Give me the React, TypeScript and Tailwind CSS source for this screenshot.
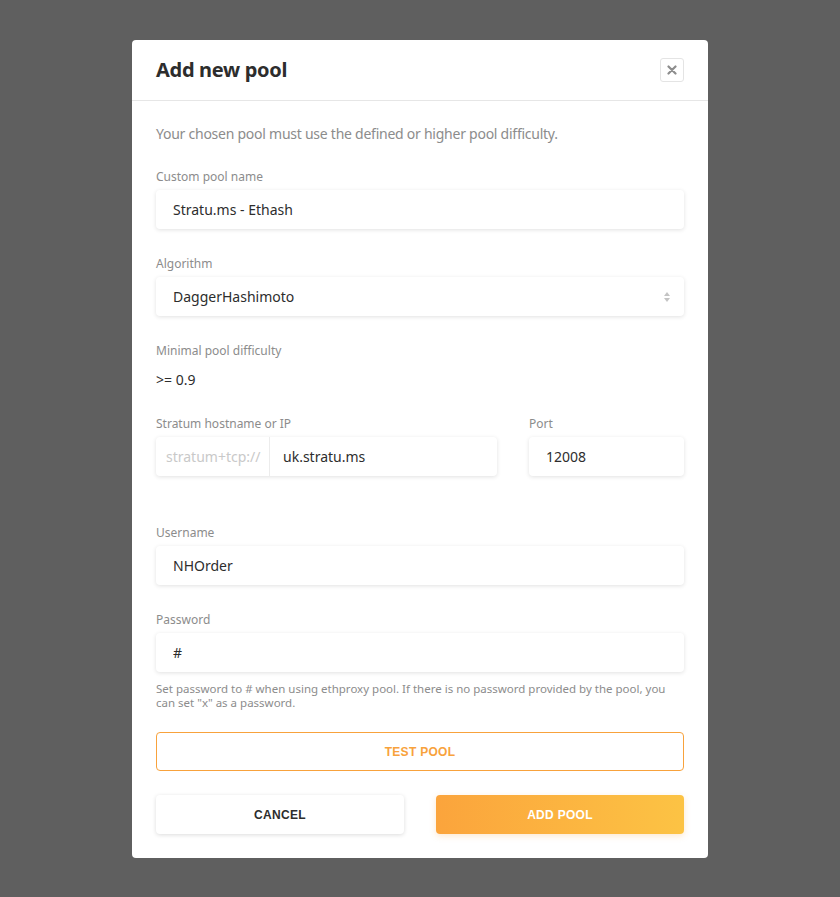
import { useState } from "react";

// Label above a field
function Label({ children }: { children: React.ReactNode }) {
  return <label className="block text-[12px] leading-[14px] text-[#8c8c8c] mb-[6px]">{children}</label>;
}

const boxCls =
  "h-[39px] bg-white rounded-[4px] shadow-[0_1px_4px_rgba(0,0,0,0.12)] flex items-center";

export default function App() {
  const [name, setName] = useState("Stratu.ms - Ethash");
  const [host, setHost] = useState("uk.stratu.ms");
  const [port, setPort] = useState("12008");
  const [user, setUser] = useState("NHOrder");
  const [pass, setPass] = useState("#");

  return (
    <div
      className="min-h-[897px] w-full bg-[#5f5f5f] flex justify-center pt-[40px]"
      style={{ fontFamily: '"Noto Sans", "Open Sans", sans-serif' }}
    >
      <div className="w-[576px] h-[818px] bg-white rounded-[4px] flex flex-col">
        {/* Header */}
        <div className="h-[61px] border-b border-[#e6e6e6] flex items-center justify-between px-[24px] shrink-0">
          <h2 className="text-[20px] font-bold text-[#2d2d2d] tracking-[-0.3px]">Add new pool</h2>
          <button className="w-[24px] h-[24px] border border-[#e4e4e4] rounded-[3px] flex items-center justify-center text-[#8d8d8d]">
            <svg width="10" height="10" viewBox="0 0 10 10">
              <path d="M1.5 1.5 L8.5 8.5 M8.5 1.5 L1.5 8.5" stroke="currentColor" strokeWidth="2.2" strokeLinecap="round" />
            </svg>
          </button>
        </div>

        {/* Body */}
        <div className="px-[24px] pt-[23px]">
          <p className="text-[14px] leading-[20px] text-[#8c8c8c] tracking-[-0.25px]">
            Your chosen pool must use the defined or higher pool difficulty.
          </p>

          <div className="mt-[26px]">
            <Label>Custom pool name</Label>
            <div className={boxCls}>
              <input
                className="w-full h-full px-[17px] text-[14px] text-[#2d2d2d] outline-none bg-transparent"
                value={name}
                onChange={(e) => setName(e.target.value)}
              />
            </div>
          </div>

          <div className="mt-[28px]">
            <Label>Algorithm</Label>
            <div className={boxCls + " justify-between px-[17px]"}>
              <span className="text-[14px] text-[#2d2d2d]">DaggerHashimoto</span>
              <svg width="8" height="12" viewBox="0 0 8 12" className="mr-[-4px]">
                <path d="M4 1 L7 5 L1 5 Z M4 11 L7 7 L1 7 Z" fill="#c4c4c4" />
              </svg>
            </div>
          </div>

          <div className="mt-[28px]">
            <Label>Minimal pool difficulty</Label>
            <div className="text-[14px] text-[#2d2d2d] leading-[20px] mt-[12px]">&gt;= 0.9</div>
          </div>

          <div className="mt-[27px] flex gap-[32px]">
            <div className="flex-1">
              <Label>Stratum hostname or IP</Label>
              <div className={boxCls}>
                <span className="w-[114px] h-full flex items-center pl-[10px] border-r border-[#ececec] text-[14px] text-[#c9c9c9] shrink-0">
                  stratum+tcp://
                </span>
                <input
                  className="flex-1 min-w-0 h-full px-[13px] text-[14px] text-[#2d2d2d] outline-none bg-transparent"
                  value={host}
                  onChange={(e) => setHost(e.target.value)}
                />
              </div>
            </div>
            <div className="w-[155px]">
              <Label>Port</Label>
              <div className={boxCls}>
                <input
                  className="w-full h-full px-[17px] text-[14px] text-[#2d2d2d] outline-none bg-transparent"
                  value={port}
                  onChange={(e) => setPort(e.target.value)}
                />
              </div>
            </div>
          </div>

          <div className="mt-[50px]">
            <Label>Username</Label>
            <div className={boxCls}>
              <input
                className="w-full h-full px-[17px] text-[14px] text-[#2d2d2d] outline-none bg-transparent"
                value={user}
                onChange={(e) => setUser(e.target.value)}
              />
            </div>
          </div>

          <div className="mt-[28px]">
            <Label>Password</Label>
            <div className={boxCls}>
              <input
                className="w-full h-full px-[17px] text-[14px] text-[#2d2d2d] outline-none bg-transparent"
                value={pass}
                onChange={(e) => setPass(e.target.value)}
              />
            </div>
            <p className="mt-[10px] text-[11.5px] leading-[14px] text-[#8c8c8c]">
              Set password to # when using ethproxy pool. If there is no password provided by the pool, you can set "x" as a password.
            </p>
          </div>

          {/* Actions */}
          <button
            className="mt-[22px] w-full h-[39px] border border-[#f8a23c] rounded-[4px] text-[12px] font-bold text-[#f8a23c] tracking-[0.3px]"
            style={{ fontFamily: '"Liberation Sans", Arial, sans-serif' }}
          >
            TEST POOL
          </button>

          <div className="mt-[24px] flex gap-[32px]">
            <button
              className="flex-1 h-[39px] bg-white rounded-[4px] shadow-[0_1px_4px_rgba(0,0,0,0.14)] text-[12px] font-bold text-[#2d2d2d] tracking-[0.3px]"
              style={{ fontFamily: '"Liberation Sans", Arial, sans-serif' }}
            >
              CANCEL
            </button>
            <button
              className="flex-1 h-[39px] rounded-[4px] bg-gradient-to-r from-[#fba43c] to-[#fcc344] shadow-[0_2px_6px_rgba(251,164,60,0.25)] text-[12px] font-bold text-white tracking-[0.3px]"
              style={{ fontFamily: '"Liberation Sans", Arial, sans-serif' }}
            >
              ADD POOL
            </button>
          </div>
        </div>
      </div>
    </div>
  );
}
